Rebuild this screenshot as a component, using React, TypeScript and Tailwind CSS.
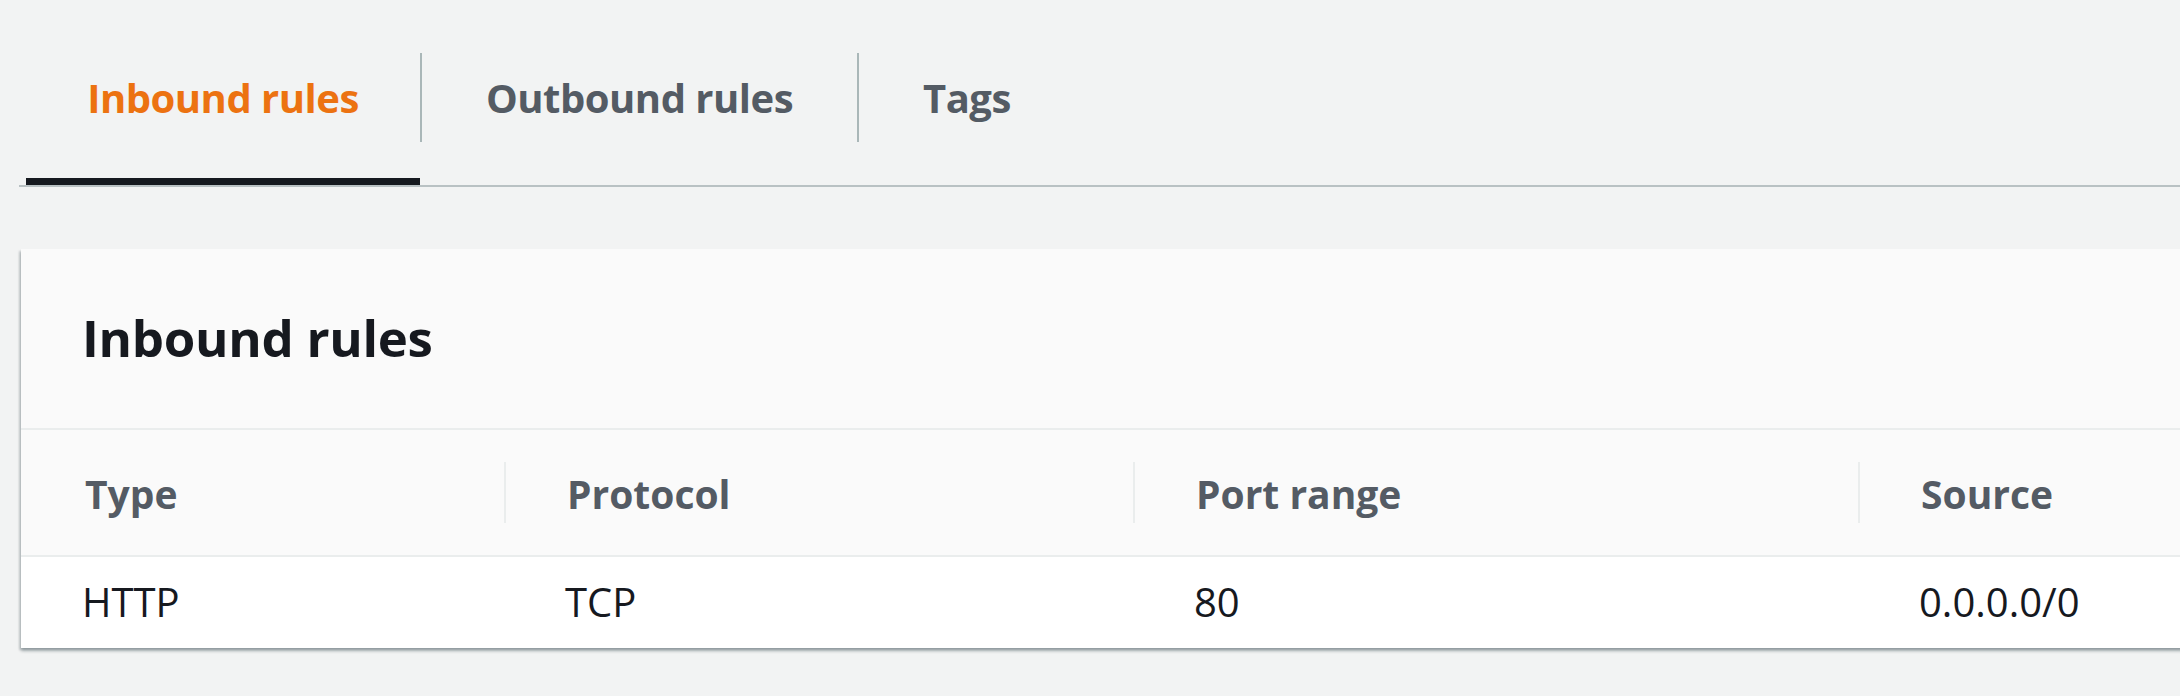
const tabs = [
  { label: "Inbound rules", width: "w-[394px]", active: true },
  { label: "Outbound rules", width: "w-[435px]", active: false },
  { label: "Tags", width: "px-[64px]", active: false },
];

const columns = [
  { title: "Type", value: "HTTP" },
  { title: "Protocol", value: "TCP" },
  { title: "Port range", value: "80" },
  { title: "Source", value: "0.0.0.0/0" },
];

const App = () => {
  return (
    <div className="w-full h-[696px] overflow-hidden bg-[#f2f3f3] font-['Open_Sans',sans-serif]">
      {/* Tabs */}
      <div className="ml-[19px] flex h-[187px] border-b-2 border-[#b9c1c3]">
        <div className="w-[7px]" />
        {tabs.map((tab, index) => (
          <div key={tab.label} className="flex">
            {index > 0 && <div className="w-[2px] h-[89px] mt-[53px] bg-[#aab7b8]" />}
            <div className={`flex flex-col ${tab.width}`}>
              <span
                className={`pt-[78px] text-center text-[40px] leading-[40px] font-bold tracking-[-0.5px] ${
                  tab.active ? "text-[#ec7211]" : "text-[#545b64]"
                }`}
              >
                {tab.label}
              </span>
              <div className="flex-1" />
              {tab.active && <div className="h-[7px] bg-[#16191f]" />}
            </div>
          </div>
        ))}
      </div>

      {/* Card */}
      <div className="ml-[21px] mt-[62px] w-[2220px] bg-white shadow-[0_3px_3px_0_rgba(0,28,36,0.3),-2px_2px_2px_0_rgba(0,28,36,0.15)]">
        <div className="h-[179px] bg-[#fafafa] pl-[61px] pt-[63px]">
          <h2 className="text-[51px] leading-[51px] font-bold text-[#16191f] tracking-[-0.3px]">
            Inbound rules
          </h2>
        </div>
        <div className="h-[2px] bg-[#eaeded]" />
        <div className="grid grid-cols-[483px_629px_725px_1fr] h-[127px] bg-[#fafafa] border-b-2 border-[#eaeded]">
          {columns.map((col, index) => (
            <div key={col.title} className="flex">
              {index > 0 && <div className="w-[2px] h-[61px] mt-[32px] bg-[#eaeded]" />}
              <span
                className={`pt-[44px] text-[39px] leading-[39px] font-bold text-[#545b64] ${
                  index > 0 ? "pl-[61px]" : "pl-[64px]"
                }`}
              >
                {col.title}
              </span>
            </div>
          ))}
        </div>
        <div className="grid grid-cols-[483px_629px_725px_1fr] h-[91px] bg-white">
          {columns.map((col) => (
            <div key={col.title} className="pl-[61px] pt-[25px] text-[40px] leading-[40px] text-[#16191f]">
              {col.value}
            </div>
          ))}
        </div>
      </div>
    </div>
  );
};

export default App;
